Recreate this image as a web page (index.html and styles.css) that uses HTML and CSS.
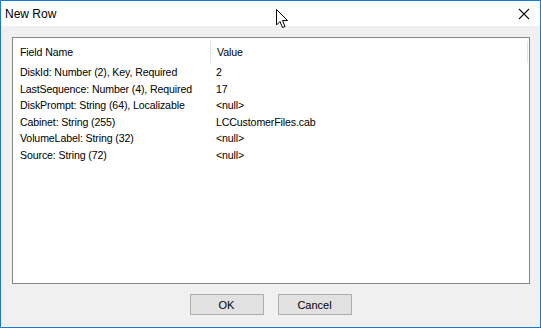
FILE: index.html
```html
<!DOCTYPE html>
<html lang="en">
<head>
  <meta charset="UTF-8" />
  <title>New Row</title>
  <link rel="stylesheet" href="styles.css">
</head>
<body>
  <div class="window">
    <!-- Title bar -->
    <div class="titlebar">
      <span class="title">New Row</span>
      <svg class="close" width="12" height="12" viewBox="0 0 12 12">
        <path d="M1 1 L11 11 M11 1 L1 11" stroke="#111" stroke-width="1.1" fill="none"/>
      </svg>
    </div>

    <!-- Client area -->
    <div class="client">
      <div class="listview">
        <div class="row header">
          <div class="col-name">Field Name</div>
          <div class="col-value">Value</div>
        </div>
        <div class="row">
          <div class="col-name">DiskId: Number (2), Key, Required</div>
          <div class="col-value">2</div>
        </div>
        <div class="row">
          <div class="col-name">LastSequence: Number (4), Required</div>
          <div class="col-value">17</div>
        </div>
        <div class="row">
          <div class="col-name">DiskPrompt: String (64), Localizable</div>
          <div class="col-value">&lt;null&gt;</div>
        </div>
        <div class="row">
          <div class="col-name">Cabinet: String (255)</div>
          <div class="col-value">LCCustomerFiles.cab</div>
        </div>
        <div class="row">
          <div class="col-name">VolumeLabel: String (32)</div>
          <div class="col-value">&lt;null&gt;</div>
        </div>
        <div class="row">
          <div class="col-name">Source: String (72)</div>
          <div class="col-value">&lt;null&gt;</div>
        </div>
      </div>

      <div class="buttons">
        <button class="btn">OK</button>
        <button class="btn">Cancel</button>
      </div>
    </div>

    <!-- mouse pointer over the title bar -->
    <svg class="cursor" width="13" height="20" viewBox="0 0 13 20">
      <path d="M0.5 0.5 L0.5 16 L4 12.5 L6.5 18.5 L9 17.5 L6.5 11.5 L11.5 11.5 Z" fill="#fff" stroke="#000" stroke-width="1"/>
    </svg>
  </div>
</body>
</html>
```

FILE: styles.css
```css
* {
  margin: 0;
  padding: 0;
  box-sizing: border-box;
}
html, body {
  width: 100%;
  height: 100%;
  background: #fff;
}
body {
  font-family: 'Liberation Sans', Arial, sans-serif;
  font-size: 10.6px;
  letter-spacing: -0.12px;
  color: #000;
}
.window {
  position: relative;
  width: 541px;
  height: 328px;
  border: 1px solid #1a7ad3;
  background: #f0f0f0;
  display: flex;
  flex-direction: column;
}
.titlebar {
  height: 25px;
  background: #fff;
  display: flex;
  align-items: center;
  justify-content: space-between;
  padding: 0 10px 0 4px;
}
.title {
  font-size: 12px;
  letter-spacing: 0;
  color: #000;
}
.close {
  display: block;
}
.client {
  flex: 1;
  display: flex;
  flex-direction: column;
  padding: 11px 10px 0 11px;
}
.listview {
  width: 518px;
  height: 247px;
  background: #fff;
  border: 1px solid #828790;
  padding-top: 1px;
}
.row {
  display: flex;
  height: 16.6px;
  line-height: 16.6px;
  white-space: nowrap;
}
.row.header {
  height: 22px;
  line-height: 22px;
  margin-top: 2px;
  margin-bottom: 1px;
}
.col-name {
  width: 197px;
  padding-left: 7px;
}
.col-value {
  flex: 1;
  padding-left: 6px;
}
.header .col-value {
  border-left: 1px solid #e5e5e5;
  border-right: 1px solid #e5e5e5;
  margin-right: 1px;
}
.buttons {
  display: flex;
  justify-content: center;
  gap: 14px;
  padding-top: 10px;
  padding-right: 1px;
}
.btn {
  width: 74px;
  height: 21px;
  background: #e1e1e1;
  border: 1px solid #adadad;
  font-family: 'Liberation Sans', Arial, sans-serif;
  font-size: 11px;
  color: #000;
}
.cursor {
  position: absolute;
  left: 275px;
  top: 8px;
}
```
